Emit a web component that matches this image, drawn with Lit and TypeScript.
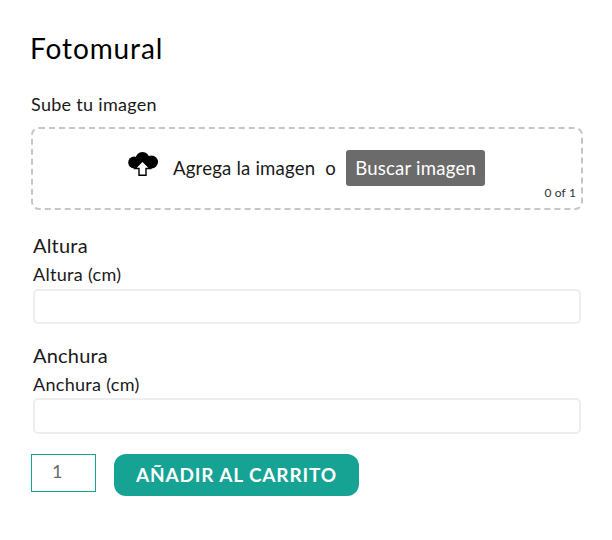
import { LitElement, html, css } from "lit";
import { customElement } from "lit/decorators.js";

@customElement("app-root")
export class AppRoot extends LitElement {
  static styles = css`
    :host { display: block; width: 612px; height: 540px; background: #fff; font-family: "Lato", "Liberation Sans", sans-serif; color: #1a1a1a; box-sizing: border-box; padding: 31px 29px 0 31px; overflow: hidden; }
    h1 { margin: 0 0 0 -1px; font: 400 28px/34px "Lato", sans-serif; letter-spacing: 0.9px; color: #000; }
    .lbl { margin-top: 27px; font-size: 18px; line-height: 24px; letter-spacing: 0.3px; }
    .drop { box-sizing: border-box; margin-top: 11px; height: 83px; border: 2px dashed #c6c6c6; border-radius: 8px; position: relative; display: flex; align-items: center; justify-content: center; padding-bottom: 1px; font-size: 18.6px; letter-spacing: 0.2px; }
    .drop svg { display: block; margin: -8px 15px 0 -1px; }
    .or { margin: 0 10px; }
    .btn { background: #6b6b6b; color: #fff; height: 36px; width: 139px; border-radius: 3px; display: flex; align-items: center; justify-content: center; }
    .count { position: absolute; right: 5px; bottom: 8px; font-size: 12px; color: #333; line-height: 14px; letter-spacing: 0.15px; }
    .field { margin: 0 2px; }
    .field h2 { margin: 0; font: 400 20px/24px "Lato", sans-serif; letter-spacing: 0.2px; }
    .field label { display: block; font-size: 18px; line-height: 24px; margin-top: 5px; letter-spacing: 0.3px; }
    .field .input { box-sizing: border-box; height: 35px; margin-top: 3px; border: 2px solid #eee; border-radius: 5px; }
    .a { margin-top: 23px; }
    .b { margin-top: 19px; }
    .b .input { height: 36px; margin-top: 2px; }
    .row { display: flex; gap: 18px; margin-top: 20px; align-items: flex-start; }
    .qty { box-sizing: border-box; width: 65px; height: 38px; border: 1px solid #16a394; color: #6b6b6b; font-size: 18px; line-height: 32px; padding-left: 20px; }
    .cart { box-sizing: border-box; width: 245px; height: 42px; padding-bottom: 2px; background: #16a394; color: #fff; border-radius: 12px; display: flex; align-items: center; justify-content: center; font-weight: 700; font-size: 19px; letter-spacing: 0.85px; }
  `;

  render() {
    return html`
      <h1>Fotomural</h1>
      <div class="lbl">Sube tu imagen</div>
      <div class="drop">
        <svg width="30" height="24" viewBox="0 0 30 24" aria-hidden="true">
          <g fill="#000">
            <circle cx="6.2" cy="10.5" r="6"/>
            <circle cx="14.5" cy="7" r="7"/>
            <circle cx="23.5" cy="10" r="6.5"/>
            <rect x="6" y="8" width="18" height="8.5"/>
          </g>
          <path d="M14.5 9l7.5 7.5h-4V23.3h-7V16.5H7z" fill="#fff" stroke="#000" stroke-width="1.4" stroke-linejoin="miter"/>
        </svg>
        <span>Agrega la imagen</span><span class="or">o</span><span class="btn">Buscar imagen</span>
        <span class="count">0 of 1</span>
      </div>
      <div class="field a"><h2>Altura</h2><label>Altura (cm)</label><div class="input"></div></div>
      <div class="field b"><h2>Anchura</h2><label>Anchura (cm)</label><div class="input"></div></div>
      <div class="row"><div class="qty">1</div><div class="cart">AÑADIR AL CARRITO</div></div>
    `;
  }
}
